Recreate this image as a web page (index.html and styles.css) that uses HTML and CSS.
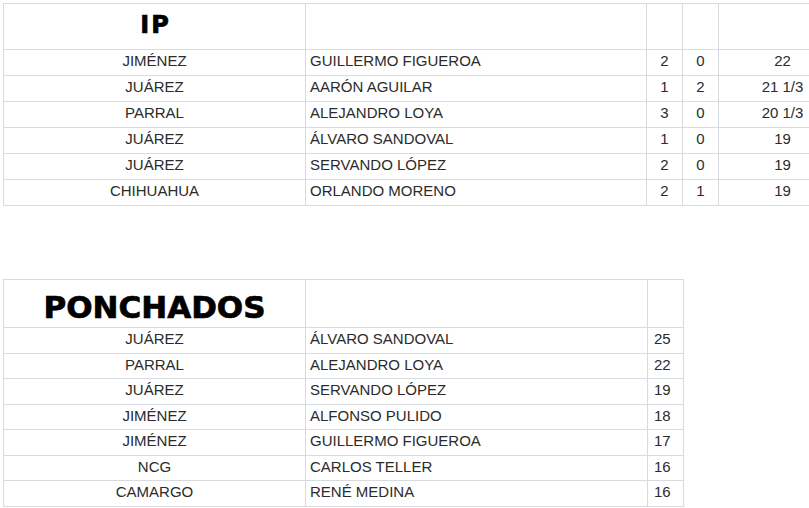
FILE: index.html
```html
<!DOCTYPE html>
<html lang="es">
<head>
<meta charset="utf-8">
<title>IP y Ponchados</title>
<link rel="stylesheet" href="styles.css">
</head>
<body>
<div class="page">
  <table class="stats stats-ip">
    <colgroup>
      <col class="c-team"><col class="c-name"><col class="c-n1"><col class="c-n2"><col class="c-ip">
    </colgroup>
    <tr class="head">
      <td class="title title-ip">IP</td><td></td><td></td><td></td><td></td>
    </tr>
    <tr><td class="team">JIMÉNEZ</td><td class="name">GUILLERMO FIGUEROA</td><td class="num">2</td><td class="num">0</td><td class="num">22</td></tr>
    <tr><td class="team">JUÁREZ</td><td class="name">AARÓN AGUILAR</td><td class="num">1</td><td class="num">2</td><td class="num">21 1/3</td></tr>
    <tr><td class="team">PARRAL</td><td class="name">ALEJANDRO LOYA</td><td class="num">3</td><td class="num">0</td><td class="num">20 1/3</td></tr>
    <tr><td class="team">JUÁREZ</td><td class="name">ÁLVARO SANDOVAL</td><td class="num">1</td><td class="num">0</td><td class="num">19</td></tr>
    <tr><td class="team">JUÁREZ</td><td class="name">SERVANDO LÓPEZ</td><td class="num">2</td><td class="num">0</td><td class="num">19</td></tr>
    <tr><td class="team">CHIHUAHUA</td><td class="name">ORLANDO MORENO</td><td class="num">2</td><td class="num">1</td><td class="num">19</td></tr>
  </table>

  <table class="stats stats-k">
    <colgroup>
      <col class="c-team"><col class="c-name2"><col class="c-k">
    </colgroup>
    <tr class="head">
      <td class="title title-k">PONCHADOS</td><td></td><td></td>
    </tr>
    <tr><td class="team">JUÁREZ</td><td class="name">ÁLVARO SANDOVAL</td><td class="knum">25</td></tr>
    <tr><td class="team">PARRAL</td><td class="name">ALEJANDRO LOYA</td><td class="knum">22</td></tr>
    <tr><td class="team">JUÁREZ</td><td class="name">SERVANDO LÓPEZ</td><td class="knum">19</td></tr>
    <tr><td class="team">JIMÉNEZ</td><td class="name">ALFONSO PULIDO</td><td class="knum">18</td></tr>
    <tr><td class="team">JIMÉNEZ</td><td class="name">GUILLERMO FIGUEROA</td><td class="knum">17</td></tr>
    <tr><td class="team">NCG</td><td class="name">CARLOS TELLER</td><td class="knum">16</td></tr>
    <tr><td class="team">CAMARGO</td><td class="name">RENÉ MEDINA</td><td class="knum">16</td></tr>
  </table>
</div>
</body>
</html>
```

FILE: styles.css
```css
html, body {
  margin: 0;
  padding: 0;
  background: #ffffff;
  overflow: hidden;
}

.page {
  padding: 3px 0 0 3px;
  width: 900px;
  font-family: "Liberation Sans", Arial, sans-serif;
  color: #2b2b2b;
}

.stats {
  border-collapse: collapse;
  table-layout: fixed;
}

.stats td {
  border: 1px solid #d6dbe1;
  padding: 0;
  font-size: 15px;
  line-height: 18px;
  vertical-align: top;
  white-space: nowrap;
  overflow: hidden;
}

.stats-ip { width: 843px; }
.stats-k { width: 680px; margin-top: 73px; }

.c-team { width: 302px; }
.c-name { width: 341px; }
.c-n1 { width: 36px; }
.c-n2 { width: 36px; }
.c-ip { width: 128px; }
.c-name2 { width: 342px; }
.c-k { width: 36px; }

.stats-ip td { height: 26px; padding-top: 2px; box-sizing: border-box; }
.stats-ip tr.head td { height: 46px; }
.stats-k td { height: 25.5px; padding-top: 2px; box-sizing: border-box; }
.stats-k tr.head td { height: 48px; }

.team { text-align: center; }
.stats td.name { padding-left: 4px; }
.num { text-align: center; }
.stats td.knum { padding-left: 6px; }

.title {
  text-align: center;
  color: #000000;
  font-family: "DejaVu Sans", "Liberation Sans", sans-serif;
  font-weight: bold;
  -webkit-text-stroke: 0.7px #000000;
}

.stats td.title-ip {
  font-size: 24px;
  line-height: 28px;
  padding-top: 7px;
  letter-spacing: 2px;
  text-indent: 2px;
}

.stats td.title-k {
  font-size: 31px;
  line-height: 36px;
  padding-top: 9px;
}
```
